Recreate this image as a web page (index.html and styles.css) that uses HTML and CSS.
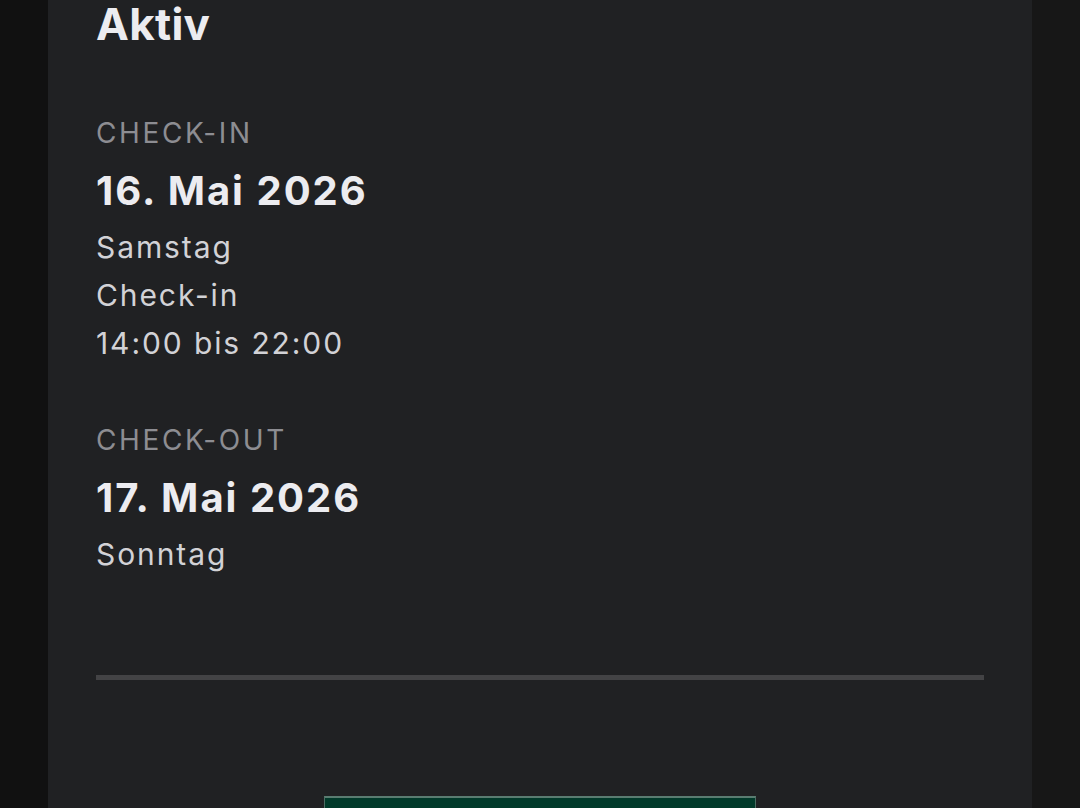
FILE: index.html
```html
<!DOCTYPE html>
<html lang="de">
<head>
<meta charset="utf-8">
<title>Buchung</title>
<link rel="stylesheet" href="styles.css">
</head>
<body>
<div class="page">
  <main class="card">
    <h1 class="title">Aktiv</h1>
    <section class="block">
      <div class="label">CHECK-IN</div>
      <div class="date">16. Mai 2026</div>
      <div class="sub">Samstag</div>
      <div class="sub">Check-in</div>
      <div class="sub">14:00 bis 22:00</div>
    </section>
    <section class="block block-out">
      <div class="label">CHECK-OUT</div>
      <div class="date">17. Mai 2026</div>
      <div class="sub">Sonntag</div>
    </section>
    <hr class="divider">
    <div class="actions">
      <div class="button"></div>
    </div>
  </main>
</div>
</body>
</html>
```

FILE: styles.css
```css
html, body {
  margin: 0;
  padding: 0;
}
body {
  background: #141414;
  font-family: Inter, "Noto Sans", sans-serif;
  overflow: hidden;
}
.page {
  display: flex;
  justify-content: center;
  padding: 0 48px;
  background: linear-gradient(to right, #111111 0 50%, #171717 50% 100%);
}
.card {
  width: 984px;
  background: #202123;
  padding: 0 48px 40px;
  box-sizing: border-box;
  display: flex;
  flex-direction: column;
  min-height: 900px;
}
.title {
  margin: 0;
  font-size: 44px;
  line-height: 48px;
  font-weight: 700;
  color: #ececf0;
  letter-spacing: 0.3px;
}
.block {
  display: flex;
  flex-direction: column;
  margin-top: 65px;
}
.block-out {
  margin-top: 53px;
}
.label {
  font-size: 28px;
  line-height: 40px;
  color: #8d8d92;
  font-weight: 400;
  letter-spacing: 2.6px;
}
.date {
  margin-top: 10px;
  margin-bottom: 4px;
  font-size: 40px;
  line-height: 56px;
  font-weight: 700;
  color: #ececf0;
  letter-spacing: 2px;
}
.sub {
  font-size: 30px;
  line-height: 48px;
  color: #d2d2d6;
  letter-spacing: 1.9px;
}
.divider {
  margin: 97px 0 0;
  border: 0;
  height: 5px;
  background: #434345;
}
.actions {
  display: flex;
  justify-content: center;
  margin-top: 116px;
}
.button {
  width: 432px;
  height: 56px;
  box-sizing: border-box;
  background: #013a2a;
  border: 1px solid #4c6c62;
  border-top: 2px solid #5a7c71;
}
```
